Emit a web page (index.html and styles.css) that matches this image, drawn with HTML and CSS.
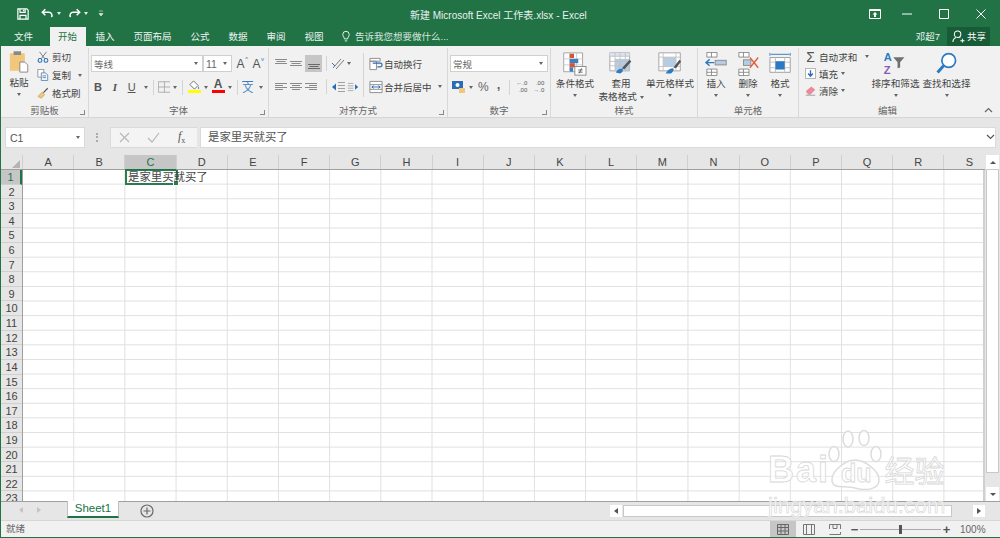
FILE: index.html
```html
<!DOCTYPE html>
<html lang="zh-CN">
<head>
    <meta charset="UTF-8">
    <title>新建 Microsoft Excel 工作表.xlsx - Excel</title>
    <link rel="stylesheet" href="styles.css">
</head>
<body>
<div class="window">
    <!-- title bar -->
    <header class="titlebar">
        <div class="qat">
            <svg class="qat-save" width="12" height="12" viewBox="0 0 14 14"><path d="M1 1h10.500L13 2.500V13H1z M3.500 1v4h6V1 M3.500 13V8.500h7V13" fill="none" stroke="#fff" stroke-width="1.400"/><rect x="7" y="2" width="1.500" height="2" fill="#fff"/></svg>
            <svg class="qat-undo" width="13" height="11" viewBox="0 0 15 12"><path d="M5 1L1.500 4.500 5 8" fill="none" stroke="#fff" stroke-width="1.700"/><path d="M2 4.500h7a3.500 3.500 0 0 1 3 5.500" fill="none" stroke="#fff" stroke-width="1.700"/></svg>
            <i class="caret caret-white"></i>
            <svg class="qat-redo" width="13" height="11" viewBox="0 0 15 12"><path d="M10 1l3.500 3.500L10 8" fill="none" stroke="#fff" stroke-width="1.700"/><path d="M13 4.500H6a3.500 3.500 0 0 0-3 5.500" fill="none" stroke="#fff" stroke-width="1.700"/></svg>
            <i class="caret caret-white"></i>
            <svg class="qat-more" width="6" height="7" viewBox="0 0 6 7"><path d="M1 1h4M1 3.500h4L3 6z" fill="#dcebe3" stroke="#dcebe3" stroke-width=".6"/></svg>
        </div>
        <div class="doc-title">新建 Microsoft Excel 工作表.xlsx - Excel</div>
        <div class="win-buttons">
            <svg class="win-display" width="12" height="10" viewBox="0 0 12 10"><path d="M.5.500h11v9H.5z" fill="none" stroke="#fff"/><path d="M1 1h10v1H1zM6 3l2.500 2.500h-1.500V8H5V5.500H3.500z" fill="#fff"/></svg>
            <svg width="10" height="10" viewBox="0 0 10 10"><path d="M0 5h10" stroke="#fff"/></svg>
            <svg width="10" height="10" viewBox="0 0 10 10"><path d="M.5.500h9v9h-9z" fill="none" stroke="#fff"/></svg>
            <svg width="10" height="10" viewBox="0 0 10 10"><path d="M.5.500l9 9M9.500.500l-9 9" stroke="#fff"/></svg>
        </div>
    </header>

    <!-- tabs -->
    <nav class="tabs">
        <a class="tab tab-file">文件</a>
        <a class="tab tab-active">开始</a>
        <a class="tab">插入</a>
        <a class="tab">页面布局</a>
        <a class="tab">公式</a>
        <a class="tab">数据</a>
        <a class="tab">审阅</a>
        <a class="tab">视图</a>
        <a class="tell-me">
            <svg width="8" height="13" viewBox="0 0 10 14"><path d="M3 10C3 8 1 7 1 4.500a4 4 0 0 1 8 0C9 7 7 8 7 10zM3.500 12.500h3" fill="none" stroke="#fff" stroke-width="1.100"/></svg>
            告诉我您想要做什么...
        </a>
        <div class="account">
            <span class="user">邓超7</span>
            <span class="share">
                <svg width="13" height="13" viewBox="0 0 14 14"><circle cx="6" cy="4.500" r="3.500" fill="none" stroke="#fff" stroke-width="1.100"/><path d="M1 13c0-3 2-4.500 3.500-5M8 8l1 .5M9 11.500h4.500M11.200 9.500v4" fill="none" stroke="#fff" stroke-width="1.100"/></svg>
                共享
            </span>
        </div>
    </nav>

    <!-- ribbon -->
    <section class="ribbon">
        <div class="group group-clipboard">
            <div class="group-body clip-body">
                <div class="big-btn paste-btn">
                    <svg width="22" height="25" viewBox="0 0 24 30"><rect x="1" y="4" width="18" height="21" rx="1" fill="#f0c77c"/><rect x="5.500" y="1.500" width="9" height="4.500" fill="#8a8a8a"/><path d="M13 14.500h6l3.500 3.500v8.500H13z" fill="#fff" stroke="#7a7a7a"/></svg>
                    <span>粘贴</span>
                    <i class="caret"></i>
                </div>
                <div class="clip-list">
                    <div class="clip-item">
                        <svg width="12" height="12" viewBox="0 0 14 14"><path d="M3 1l6 8M11 1L5 9" stroke="#6a6a6a" fill="none"/><circle cx="3.500" cy="11" r="2.200" fill="none" stroke="#2b6cb5" stroke-width="1.200"/><circle cx="10.500" cy="11" r="2.200" fill="none" stroke="#2b6cb5" stroke-width="1.200"/></svg>
                        剪切
                    </div>
                    <div class="clip-item">
                        <svg width="12" height="12" viewBox="0 0 14 14"><path d="M1 .500h7v9H1z" fill="#fff" stroke="#8a8a8a"/><path d="M5 4.500h5l2.500 2.500v6.500H5z" fill="#eef4fa" stroke="#5a85b0"/><path d="M6.500 8h4M6.500 10h4" stroke="#5a85b0"/></svg>
                        复制
                        <i class="caret caret-copy"></i>
                    </div>
                    <div class="clip-item">
                        <svg width="12" height="12" viewBox="0 0 14 14"><path d="M1 11l5-5 3 3-4 4z" fill="#f0c77c" stroke="#b08c40" stroke-width=".6"/><path d="M7 6l5-5 1 1-5 5z" fill="#555"/></svg>
                        格式刷
                    </div>
                </div>
            </div>
            <div class="group-name">剪贴板<i class="launcher"></i></div>
        </div>

        <div class="group group-font">
            <div class="group-body stack">
                <div class="row font-row">
                    <div class="input font-name">等线<i class="caret"></i></div>
                    <div class="input font-size">11<i class="caret"></i></div>
                    <span class="grow-btn">A<sup>^</sup></span>
                    <span class="grow-btn">A<sup class="blue">v</sup></span>
                </div>
                <div class="row font-tools">
                    <b class="fmt">B</b>
                    <i class="fmt fmt-i">I</i>
                    <u class="fmt fmt-u">U</u>
                    <i class="caret"></i>
                    <span class="vsep"></span>
                    <svg width="13" height="12" viewBox="0 0 16 14"><path d="M.5.500h15v13H.5zM8 .500v13M.5 7h15" fill="none" stroke="#a0a0a0"/></svg>
                    <i class="caret"></i>
                    <span class="vsep"></span>
                    <span class="color-btn">
                        <svg width="12" height="10" viewBox="0 0 13 11"><path d="M6 1l5 5-4 4-5-5z" fill="#fff" stroke="#666"/><path d="M11.500 7c1 1.500 1 3 0 3s-1-1.500 0-3" fill="#5b8fc7"/></svg>
                        <em class="bar bar-yellow"></em>
                    </span>
                    <i class="caret caret-tight"></i>
                    <span class="color-btn color-a">A<em class="bar bar-red"></em></span>
                    <i class="caret"></i>
                    <span class="vsep"></span>
                    <span class="wen">文</span>
                    <i class="caret"></i>
                </div>
            </div>
            <div class="group-name">字体<i class="launcher"></i></div>
        </div>

        <div class="group group-align">
            <div class="group-body align-body">
                <div class="align-icons">
                    <div class="row align-row">
                        <svg width="14" height="12" viewBox="0 0 14 12"><path d="M1 1.500h12M2.500 3.500h9M1 5.500h12" stroke="#8a8a8a"/></svg>
                        <svg width="14" height="12" viewBox="0 0 14 12"><path d="M1 3.500h12M2.500 5.500h9M1 7.500h12" stroke="#8a8a8a"/></svg>
                        <span class="on"><svg width="14" height="12" viewBox="0 0 14 12"><path d="M1 6.500h12M2.500 8.500h9M1 10.500h12" stroke="#6a6a6a"/></svg></span>
                        <span class="vsep"></span>
                        <svg width="15" height="13" viewBox="0 0 15 13"><path d="M2 11L10 2M5 12l8-9" stroke="#777" fill="none"/><path d="M1 6l3 3" stroke="#2b6cb5"/></svg>
                        <i class="caret"></i>
                    </div>
                    <div class="row align-row">
                        <svg width="14" height="12" viewBox="0 0 14 12"><path d="M1 2.500h12M1 4.500h8M1 6.500h12M1 8.500h8" stroke="#8a8a8a"/></svg>
                        <svg width="14" height="12" viewBox="0 0 14 12"><path d="M1 2.500h12M3 4.500h8M1 6.500h12M3 8.500h8" stroke="#8a8a8a"/></svg>
                        <svg width="14" height="12" viewBox="0 0 14 12"><path d="M1 2.500h12M5 4.500h8M1 6.500h12M5 8.500h8" stroke="#8a8a8a"/></svg>
                        <span class="vsep vsep-wide"></span>
                        <svg width="15" height="12" viewBox="0 0 15 12"><path d="M7 1.500h7M7 4.500h7M7 7.500h7M7 10.500h7" stroke="#a0a0a0"/><path d="M1 6l4-3.500v7z" fill="#2b6cb5"/></svg>
                        <svg width="12" height="12" viewBox="0 0 15 12"><path d="M1 1.500h7M1 4.500h7M1 7.500h7M1 10.500h7" stroke="#a0a0a0"/><path d="M14 6l-4-3.500v7z" fill="#2b6cb5"/></svg>
                    </div>
                </div>
                <span class="vsep tall"></span>
                <div class="align-wide">
                    <div class="wide-item">
                        <svg width="14" height="14" viewBox="0 0 15 14"><path d="M1 1h11v3H1zM1 4h7v9H1z" fill="#fff" stroke="#8a8a8a"/><path d="M4 6h8a2 2 0 0 1 0 4H9" fill="none" stroke="#2b6cb5" stroke-width="1.300"/></svg>
                        自动换行
                    </div>
                    <div class="wide-item">
                        <svg width="14" height="14" viewBox="0 0 15 14"><path d="M1 1h13v12H1z" fill="#fff" stroke="#8a8a8a"/><path d="M1 4.500h13M1 9.500h13" stroke="#8a8a8a"/><path d="M3 7h9M3 7l2-1.500M3 7l2 1.500M12 7l-2-1.500M12 7l-2 1.500" stroke="#2b6cb5" fill="none"/></svg>
                        合并后居中
                        <i class="caret caret-merge"></i>
                    </div>
                </div>
            </div>
            <div class="group-name">对齐方式<i class="launcher"></i></div>
        </div>

        <div class="group group-number">
            <div class="group-body stack">
                <div class="input num-format">常规<i class="caret"></i></div>
                <div class="row num-tools">
                    <svg width="14" height="14" viewBox="0 0 14 14"><rect x="0" y="1" width="11" height="8" fill="#2b6cb5"/><circle cx="5.500" cy="5" r="2" fill="#fff"/><rect x="7" y="8" width="6" height="5" fill="#f0c77c"/></svg>
                    <i class="caret"></i>
                    <span class="pct">%</span>
                    <span class="comma">,</span>
                    <span class="vsep"></span>
                    <span class="dec"><em><b>←</b>.0</em><em>.00</em></span>
                    <span class="dec"><em>.00</em><em><b>→</b>.0</em></span>
                </div>
            </div>
            <div class="group-name">数字<i class="launcher"></i></div>
        </div>

        <div class="group group-styles">
            <div class="group-body big-row">
                <div class="big-btn style-btn style-cond">
                    <svg viewBox="0 0 30 28"><path d="M2 1h22v22H2z" fill="#fff" stroke="#9a9a9a"/><path d="M2 8h22M2 15h22M9 1v22M17 1v22" stroke="#c8c8c8"/><rect x="9" y="2" width="5" height="5" fill="#d2553a"/><rect x="9" y="8" width="10" height="5" fill="#3f7fbf"/><rect x="9" y="13" width="6" height="5" fill="#d2553a"/><rect x="9" y="18" width="4" height="5" fill="#3f7fbf"/><rect x="15" y="17" width="13" height="10" fill="#fff" stroke="#808080"/><path d="M19 21h5M19 23.500h5M23 19l-3 6" stroke="#555" fill="none"/></svg>
                    <span>条件格式</span>
                    <i class="caret"></i>
                </div>
                <div class="big-btn style-btn style-table">
                    <svg viewBox="0 0 28 28"><path d="M1 1h23v21H1z" fill="#fff" stroke="#9a9a9a"/><rect x="1" y="1" width="23" height="4" fill="#dbe4ed"/><rect x="7" y="8" width="17" height="14" fill="#b7cce3"/><path d="M1 5h23M1 11h23M1 16h23M7 1v21M13 1v21M19 1v21" stroke="#c0c0c0"/><path d="M26 11l-8 9-3-1 9-10z" fill="#555"/><path d="M8 24c2-4 5-5 8-4 1 2-1 4-3 5z" fill="#2b7bc4"/></svg>
                    <span>套用<br>表格格式 <i class="caret caret-inline"></i></span>
                </div>
                <div class="big-btn style-btn style-cell">
                    <svg viewBox="0 0 28 28"><path d="M1 1h25v21H1z" fill="#fff" stroke="#9a9a9a"/><rect x="6" y="6" width="15" height="11" fill="#b7cce3"/><path d="M1 6h25M1 17h25M6 1v21M21 1v21" stroke="#c0c0c0"/><path d="M27 11l-6 8-3-1 7-9z" fill="#555"/><path d="M9 25c2-4 5-6 9-6 1 2-1 5-3 6z" fill="#2b7bc4"/></svg>
                    <span>单元格样式</span>
                    <i class="caret"></i>
                </div>
            </div>
            <div class="group-name">样式</div>
        </div>

        <div class="group group-cells">
            <div class="group-body big-row">
                <div class="big-btn cell-btn">
                    <svg viewBox="0 0 24 26"><path d="M2 .500h11v5H2zM7 .500v5M2 18.500h11v7H2zM7 18.500v7M2 22h11" fill="#fff" stroke="#8a8a8a"/><rect x="11" y="9" width="12" height="5" fill="#b7cce3" stroke="#8a8a8a"/><path d="M10 11.500H1M5 8l-4 3.500L5 15" fill="none" stroke="#2b7bc4" stroke-width="1.500"/></svg>
                    <span>插入</span>
                    <i class="caret"></i>
                </div>
                <div class="big-btn cell-btn">
                    <svg viewBox="0 0 24 26"><path d="M2 .500h11v5H2zM7 .500v5M2 18.500h11v7H2zM7 18.500v7M2 22h11" fill="#fff" stroke="#8a8a8a"/><rect x="7" y="8.500" width="8" height="6" fill="#b7cce3" stroke="#8a8a8a"/><path d="M14 6l9 11M23 6l-9 11" stroke="#e0603a" stroke-width="1.500"/></svg>
                    <span>删除</span>
                    <i class="caret"></i>
                </div>
                <div class="big-btn cell-btn">
                    <svg viewBox="0 0 24 26"><path d="M1 1v3M23 1v3M2 2.500h20" stroke="#2b7bc4"/><path d="M1 6h22v16H1z" fill="#fff" stroke="#9a9a9a"/><path d="M1 11h22M1 17h22M7 6v16M17 6v16" stroke="#c0c0c0"/><rect x="7" y="10" width="10" height="9" fill="#2b7bc4"/></svg>
                    <span>格式</span>
                    <i class="caret"></i>
                </div>
            </div>
            <div class="group-name">单元格</div>
        </div>

        <div class="group group-edit">
            <div class="group-body edit-body">
                <div class="edit-list">
                    <div class="edit-item"><span class="sigma">Σ</span>自动求和<i class="caret caret-sum"></i></div>
                    <div class="edit-item">
                        <svg width="11" height="11" viewBox="0 0 14 14"><path d="M.5.500h13v13H.5z" fill="#fff" stroke="#9a9a9a"/><path d="M7 3v7M4 7l3 3.500L10 7" fill="none" stroke="#2b6cb5" stroke-width="1.700"/></svg>
                        填充<i class="caret"></i>
                    </div>
                    <div class="edit-item">
                        <svg width="11" height="11" viewBox="0 0 14 14"><path d="M1 8l7-6 5 4-6 6H4z" fill="#ea8a9a"/><path d="M1 13h12" stroke="#8a8a8a"/></svg>
                        清除<i class="caret"></i>
                    </div>
                </div>
                <div class="big-btn edit-btn">
                    <svg viewBox="0 0 30 28"><text x="1" y="11" class="az az-a">A</text><text x="1" y="26" class="az az-z">Z</text><path d="M12 6h13l-5 6v6l-3 1v-7z" fill="#707070"/></svg>
                    <span>排序和筛选</span>
                    <i class="caret"></i>
                </div>
                <div class="big-btn edit-btn">
                    <svg viewBox="0 0 26 28"><circle cx="16" cy="10" r="8" fill="#fff" stroke="#2b7bc4" stroke-width="2"/><path d="M10 16L3 24" stroke="#2b7bc4" stroke-width="3.500"/></svg>
                    <span>查找和选择</span>
                    <i class="caret"></i>
                </div>
            </div>
            <div class="group-name">编辑</div>
        </div>
        <svg class="collapse" width="9" height="6" viewBox="0 0 9 6"><path d="M1 5l3.500-3.500L8 5" fill="none" stroke="#666" stroke-width="1.200"/></svg>
    </section>

    <!-- formula bar -->
    <section class="formula-bar">
        <div class="name-box">C1<i class="caret"></i></div>
        <div class="fb-grip"></div>
        <div class="fb-btns">
            <svg width="11" height="11" viewBox="0 0 11 11"><path d="M1 1l9 9M10 1l-9 9" stroke="#b8b8b8" stroke-width="1.200"/></svg>
            <svg width="13" height="11" viewBox="0 0 13 11"><path d="M1 6l4 4 7-9" fill="none" stroke="#b8b8b8" stroke-width="1.200"/></svg>
            <span class="fx">f<sub>x</sub></span>
        </div>
        <div class="fb-input">是家里买就买了</div>
        <svg class="fb-down" width="9" height="6" viewBox="0 0 9 6"><path d="M1 1l3.500 3.500L8 1" fill="none" stroke="#555" stroke-width="1.200"/></svg>
    </section>

    <!-- sheet -->
    <section class="sheet">
        <div class="sheet-main">
            <div class="col-heads">
                <div class="corner"></div>
                <span>A</span><span>B</span><span class="sel">C</span><span>D</span><span>E</span><span>F</span><span>G</span><span>H</span><span>I</span><span>J</span><span>K</span><span>L</span><span>M</span><span>N</span><span>O</span><span>P</span><span>Q</span><span>R</span><span>S</span>
            </div>
            <div class="grid-wrap">
                <div class="row-heads">
                    <span class="sel">1</span><span>2</span><span>3</span><span>4</span><span>5</span><span>6</span><span>7</span><span>8</span><span>9</span><span>10</span><span>11</span><span>12</span><span>13</span><span>14</span><span>15</span><span>16</span><span>17</span><span>18</span><span>19</span><span>20</span><span>21</span><span>22</span><span>23</span>
                </div>
                <div class="cells">
                    <div class="cell-text">是家里买就买了</div>
                    <div class="active-cell"></div>
                </div>
            </div>
        </div>
        <div class="vscroll">
            <span class="arrow"><i class="tri tri-up"></i></span>
            <div class="thumb"></div>
            <span class="arrow"><i class="tri tri-down"></i></span>
        </div>
    </section>

    <!-- sheet tabs -->
    <section class="tabbar">
        <div class="sheet-nav"><i class="tri tri-left"></i><i class="tri tri-right"></i></div>
        <div class="sheet-tab">Sheet1</div>
        <svg class="add-sheet" width="14" height="14" viewBox="0 0 14 14"><circle cx="7" cy="7" r="6" fill="none" stroke="#6a6a6a" stroke-width="1.200"/><path d="M7 3.500v7M3.500 7h7" stroke="#6a6a6a" stroke-width="1.200"/></svg>
        <div class="hscroll">
            <span class="arrow"><i class="tri tri-left tri-dark"></i></span>
            <div class="hthumb"></div>
            <span class="arrow"><i class="tri tri-right tri-dark"></i></span>
        </div>
    </section>

    <!-- status bar -->
    <footer class="statusbar">
        <span class="status-text">就绪</span>
        <div class="views">
            <span class="view view-on"><svg width="12" height="11" viewBox="0 0 12 11"><path d="M.5.500h11v10H.5zM4 .500v10M8 .500v10M.5 3.500h11M.5 7h11" fill="none" stroke="#666"/></svg></span>
            <span class="view"><svg width="12" height="11" viewBox="0 0 12 11"><path d="M.5.500h11v10H.5zM3.500.500v10M8.500.500v10" fill="none" stroke="#777"/></svg></span>
            <span class="view"><svg width="12" height="11" viewBox="0 0 12 11"><path d="M.5 5V.500h11V5M.5 10.500h11V8M4 .500v4h4v-4" fill="none" stroke="#777"/></svg></span>
        </div>
        <div class="zoom">
            <span class="zoom-btn">−</span>
            <div class="slider"><i></i></div>
            <span class="zoom-btn">+</span>
            <span class="zoom-val">100%</span>
        </div>
    </footer>

    <!-- photo watermark lying over the sheet -->
    <div class="watermark">
        <svg class="wm-paw" width="60" height="62" viewBox="0 0 60 62"><g fill="rgba(255,255,255,.7)" stroke="#dcdcdc" stroke-width="1.500"><ellipse cx="7" cy="24" rx="5" ry="7.500"/><ellipse cx="21" cy="9" rx="5" ry="8"/><ellipse cx="37" cy="8" rx="5" ry="7.500"/><ellipse cx="49" cy="24" rx="5" ry="7.500"/><path d="M5 50c0-10 14-20 23-20s24 10 24 20-14 11-24 8-23 2-23-8z"/></g></svg>
        <div class="wm-line">
            <span class="wm-bai">Bai</span>
            <span class="wm-du">du</span>
            <span class="wm-cn">经验</span>
        </div>
        <div class="wm-url">jingyan.baidu.com</div>
    </div>
</div>
</body>
</html>
```

FILE: styles.css
```css
* {
    box-sizing: border-box;
}

html, body {
    margin: 0;
    height: 100%;
}

body {
    font-family: "Liberation Sans", "Noto Sans CJK SC", sans-serif;
    font-size: 10px;
    color: #444;
    overflow: hidden;
}

i, em, sup, sub {
    font-style: normal;
}

.window {
    width: 1000px;
    height: 538px;
    display: flex;
    flex-direction: column;
    border: 1px solid #217346;
    border-top: 0;
    border-right: 0;
    background: #e6e6e6;
    position: relative;
    overflow: hidden;
}

.caret {
    display: inline-block;
    flex: none;
    width: 0;
    height: 0;
    border: 2.500px solid transparent;
    border-top: 3px solid #666;
    border-bottom: 0;
}

.caret-white {
    border-top-color: #e4efe9;
}

/* title bar */
.titlebar {
    height: 27px;
    background: #217346;
    display: flex;
    align-items: center;
    color: #fff;
    position: relative;
    flex: none;
}

.qat {
    display: flex;
    align-items: center;
    margin-left: 16px;
}

.qat-undo {
    margin-left: 12px;
    margin-right: 3px;
}

.qat-redo {
    margin-left: 7px;
    margin-right: 3px;
}

.qat-more {
    margin-left: 10px;
}

.doc-title {
    position: absolute;
    left: 409px;
    top: 7px;
    font-size: 10px;
    color: #e8f1ec;
    white-space: nowrap;
}

.win-buttons {
    margin-left: auto;
    margin-right: 14px;
    display: flex;
    align-items: center;
    gap: 27px;
}

.win-display {
    margin-right: -6px;
}

/* tabs */
.tabs {
    height: 19px;
    background: #217346;
    display: flex;
    align-items: stretch;
    flex: none;
    color: #eef5f1;
    font-size: 9.500px;
    line-height: 20px;
}

.tab {
    padding: 0 9.500px;
    white-space: nowrap;
}

.tab-file {
    padding: 0 13px;
    width: 49px;
}

.tab-active {
    background: #f1f1f1;
    color: #217346;
    width: 36px;
    padding: 0 8px;
}

.tell-me {
    display: flex;
    align-items: center;
    gap: 5px;
    margin-left: 9px;
    color: #d8e7df;
    white-space: nowrap;
}

.account {
    margin-left: auto;
    display: flex;
    align-items: center;
    margin-right: 10px;
}

.user {
    margin-right: 7px;
}

.share {
    background: #185c37;
    height: 19px;
    width: 43px;
    display: flex;
    align-items: center;
    gap: 2px;
    padding-left: 5px;
    color: #fff;
}

/* ribbon */
.ribbon {
    height: 72px;
    background: #f1f1f1;
    border-bottom: 1px solid #d6d6d6;
    display: flex;
    flex: none;
    position: relative;
}

.group {
    display: flex;
    flex-direction: column;
    padding-top: 2px;
    border-right: 1px solid #d8d8d8;
    margin-top: 2px;
    position: relative;
}

.group-body {
    flex: 1;
    min-height: 0;
}

.group-name {
    height: 13px;
    flex: none;
    line-height: 13px;
    text-align: center;
    font-size: 9.500px;
    color: #666;
    position: relative;
}

.launcher {
    position: absolute;
    right: 3px;
    bottom: 2px;
    width: 5px;
    height: 5px;
    border-right: 1px solid #888;
    border-bottom: 1px solid #888;
}

.row {
    display: flex;
    align-items: center;
}

.stack {
    display: flex;
    flex-direction: column;
}

.vsep {
    display: inline-block;
    flex: none;
    width: 1px;
    height: 15px;
    background: #d4d4d4;
}

.big-btn {
    display: flex;
    flex-direction: column;
    align-items: center;
    line-height: 13px;
    font-size: 9.600px;
    color: #444;
    text-align: center;
    white-space: nowrap;
    flex: none;
}

.big-row,
.edit-body {
    display: flex;
    padding-top: 2px;
}

.big-row svg,
.edit-btn svg {
    height: 24px;
    flex: none;
}

.big-btn span {
    margin-top: 1px;
}

.big-btn > .caret {
    margin-top: 4px;
}

/* clipboard */
.group-clipboard {
    width: 88px;
}

.clip-body {
    display: flex;
}

.paste-btn {
    width: 36px;
}

.clip-list {
    display: flex;
    flex-direction: column;
    margin-top: -2px;
}

.clip-item {
    height: 18px;
    display: flex;
    align-items: center;
    gap: 3px;
    font-size: 9.500px;
    white-space: nowrap;
}

.caret-copy {
    margin-left: 4px;
}

/* font */
.group-font {
    width: 180px;
}

.font-row {
    padding: 5px 0 0 2px;
}

.input {
    height: 17px;
    background: #fff;
    border: 1px solid #d0d0d0;
    display: flex;
    align-items: center;
    justify-content: space-between;
    padding: 0 4px 0 2px;
    font-size: 9.500px;
    color: #666;
}

.font-name {
    width: 112px;
}

.font-size {
    width: 29px;
    margin-left: 0;
    font-size: 10.500px;
}

.grow-btn {
    width: 15px;
    margin-left: 1px;
    font-size: 12px;
    color: #555;
    text-align: center;
    position: relative;
}

.grow-btn sup {
    font-size: 6px;
    position: absolute;
    top: -1px;
    right: 0;
    color: #555;
}

.grow-btn sup.blue {
    color: #2b7bc4;
}

.font-tools {
    margin-top: 7px;
    padding-left: 1px;
    height: 16px;
}

.fmt {
    width: 16px;
    margin-right: 1px;
    font-size: 11px;
    color: #555;
    text-align: center;
}

.fmt-i {
    font-style: italic;
    font-family: "Liberation Serif", serif;
    font-weight: bold;
}

.font-tools .caret {
    margin: 0 5px 0 3px;
}

.font-tools .caret-tight {
    margin-right: 3px;
}

.font-tools .vsep {
    margin-right: 4px;
}

.color-btn {
    width: 14px;
    height: 16px;
    padding-bottom: 2px;
    display: flex;
    flex-direction: column;
    align-items: center;
    justify-content: flex-end;
}

.bar {
    display: block;
    width: 13px;
    height: 3px;
    flex: none;
}

.bar-yellow {
    background: #ffff00;
}

.bar-red {
    background: #ff0000;
}

.color-a {
    font-size: 12px;
    line-height: 11px;
    font-weight: bold;
    color: #555;
}

.wen {
    font-size: 11px;
    color: #3c7fc0;
    width: 14px;
    text-decoration: overline;
}

/* alignment */
.group-align {
    width: 179px;
}

.align-body {
    display: flex;
    padding: 3px 0 0 5px;
}

.align-icons {
    width: 86px;
}

.align-row {
    height: 21px;
    gap: 1px;
    margin-bottom: 2px;
}

.align-row .on {
    background: #c6c6c6;
    width: 17px;
    height: 17px;
    display: flex;
    align-items: center;
    justify-content: center;
    margin-left: 1px;
}

.align-row .vsep {
    margin: 0 3px;
}

.align-row .vsep-wide {
    margin-left: 7px;
}

.vsep.tall {
    height: 44px;
    margin: 0 5px 0 3px;
}

.align-wide {
    display: flex;
    flex-direction: column;
    margin-top: -1px;
}

.wide-item {
    height: 23px;
    display: flex;
    align-items: center;
    gap: 1px;
    font-size: 9.500px;
    white-space: nowrap;
}

.caret-merge {
    margin-left: 5px;
}

/* number */
.group-number {
    width: 103px;
}

.group-number .stack {
    padding: 5px 0 0 2px;
}

.num-format {
    width: 98px;
}

.num-tools {
    margin-top: 7px;
    padding-left: 2px;
    height: 16px;
}

.num-tools .caret {
    margin: 0 5px 0 3px;
}

.pct {
    font-size: 12px;
    color: #666;
    margin-right: 8px;
}

.comma {
    font-size: 13px;
    font-weight: bold;
    color: #666;
    margin: -6px 9px 0 0;
}

.dec {
    display: flex;
    flex-direction: column;
    font-size: 6px;
    line-height: 7px;
    color: #555;
    margin-left: 4px;
    width: 13px;
    text-align: right;
}

.dec b {
    color: #2b7bc4;
}

/* styles / cells */
.group-styles {
    width: 147px;
}

.group-cells {
    width: 101px;
}

.style-cond {
    width: 48px;
}

.style-table {
    width: 44px;
}

.style-cell {
    width: 54px;
}

.caret-inline {
    vertical-align: middle;
}

.cell-btn {
    width: 32px;
}

.cell-btn:first-child {
    margin-left: 2px;
}

/* editing */
.group-edit {
    width: 177px;
    border-right: 0;
}

.edit-list {
    width: 71px;
    margin-top: -4px;
    padding-left: 6px;
}

.edit-item {
    height: 17px;
    display: flex;
    align-items: center;
    gap: 3px;
    font-size: 9.600px;
    white-space: nowrap;
}

.sigma {
    font-size: 14px;
    width: 11px;
    color: #555;
    text-align: center;
}

.caret-sum {
    margin-left: 5px;
}

.edit-btn {
    width: 51px;
}

.az {
    font-size: 13px;
    font-weight: bold;
}

.az-a {
    fill: #2b7bc4;
}

.az-z {
    fill: #8a5bb5;
}

.collapse {
    position: absolute;
    right: 7px;
    bottom: 4px;
}

/* formula bar */
.formula-bar {
    height: 37px;
    padding: 9px 4px 0 4px;
    display: flex;
    align-items: flex-start;
    flex: none;
    background: #e6e6e6;
    position: relative;
}

.name-box {
    width: 80px;
    height: 21px;
    background: #fff;
    border: 1px solid #dadada;
    display: flex;
    align-items: center;
    justify-content: space-between;
    padding: 0 4px;
    font-size: 10.500px;
    color: #555;
}

.fb-grip {
    width: 25px;
    height: 21px;
    position: relative;
}

.fb-grip::after {
    content: "";
    position: absolute;
    left: 11px;
    top: 6px;
    width: 2px;
    height: 9px;
    border-left: 2px dotted #aaa;
}

.fb-btns {
    width: 87px;
    height: 21px;
    background: #f4f4f4;
    border: 1px solid #dadada;
    border-right: 0;
    display: flex;
    align-items: center;
    gap: 17px;
    padding-left: 8px;
}

.fx {
    font-family: "Liberation Serif", serif;
    font-style: italic;
    font-size: 12px;
    color: #555;
    margin-left: 1px;
}

.fx sub {
    font-size: 8px;
}

.fb-input {
    flex: 1;
    height: 21px;
    margin-left: 3px;
    background: #fff;
    border: 1px solid #dadada;
    padding-left: 7px;
    line-height: 19px;
    font-size: 11.400px;
    color: #555;
}

.fb-down {
    position: absolute;
    right: 5px;
    top: 16px;
}

/* sheet */
.sheet {
    flex: 1;
    min-height: 0;
    display: flex;
}

.sheet-main {
    flex: 1;
    min-width: 0;
    display: flex;
    flex-direction: column;
    overflow: hidden;
}

.col-heads {
    height: 15px;
    display: flex;
    flex: none;
    border-bottom: 1px solid #9f9f9f;
    background: #e6e6e6;
}

.corner {
    width: 22px;
    flex: none;
    position: relative;
    border-right: 1px solid #cfcfcf;
}

.corner::after {
    content: "";
    position: absolute;
    right: 2px;
    bottom: 1px;
    border: 4.500px solid #b4b4b4;
    border-top-color: transparent;
    border-left-color: transparent;
}

.col-heads span {
    width: 51.200px;
    flex: none;
    text-align: center;
    font-size: 11px;
    line-height: 14px;
    color: #444;
    border-right: 1px solid #cfcfcf;
}

.col-heads span.sel {
    background: #c6c6c6;
    color: #217346;
    border-bottom: 1px solid #217346;
    height: 15px;
}

.grid-wrap {
    flex: 1;
    min-height: 0;
    display: flex;
    position: relative;
}

.row-heads {
    width: 22px;
    flex: none;
    display: flex;
    flex-direction: column;
    background: #e6e6e6;
    border-right: 1px solid #9f9f9f;
    overflow: hidden;
}

.row-heads span {
    height: 14.620px;
    flex: none;
    text-align: center;
    font-size: 11px;
    line-height: 14px;
    color: #444;
    border-bottom: 1px solid #cfcfcf;
}

.row-heads span.sel {
    background: #c6c6c6;
    color: #217346;
    border-right: 2px solid #217346;
}

.cells {
    flex: 1;
    min-width: 0;
    position: relative;
    background-color: #fff;
    background-image:
        linear-gradient(to right, transparent 50.200px, #e0e0e0 50.200px),
        linear-gradient(to bottom, transparent 13.620px, #e0e0e0 13.620px);
    background-size: 51.200px 100%, 100% 14.620px;
    border-right: 2px solid #d0d0d0;
    overflow: hidden;
}

.cell-text {
    position: absolute;
    left: 105px;
    top: 0;
    font-size: 11.400px;
    line-height: 15px;
    color: #444;
    white-space: nowrap;
    z-index: 1;
}

.active-cell {
    position: absolute;
    left: 102px;
    top: -1px;
    width: 53px;
    height: 16px;
    border: 2px solid #2a7d50;
}

.active-cell::after {
    content: "";
    position: absolute;
    right: -3px;
    bottom: -3px;
    width: 4px;
    height: 4px;
    background: #2a7d50;
    border: 1px solid #fff;
}

/* scrollbars */
.vscroll {
    width: 15px;
    flex: none;
    background: #e6e6e6;
    display: flex;
    flex-direction: column;
}

.arrow {
    width: 13px;
    height: 14px;
    background: #fff;
    flex: none;
    display: flex;
    align-items: center;
    justify-content: center;
}

.vscroll .arrow {
    margin: 0 auto;
}

.thumb {
    flex: 1;
    background: #fff;
    margin: 0 1px 14px;
    border: 1px solid #c8c8c8;
}

.tri {
    display: inline-block;
    width: 0;
    height: 0;
    border: 3px solid transparent;
}

.tri-up {
    border-top: 0;
    border-bottom: 3px solid #555;
}

.tri-down {
    border-bottom: 0;
    border-top: 3px solid #555;
}

.tri-left {
    border-left: 0;
    border-right: 4px solid #c4c4c4;
}

.tri-right {
    border-right: 0;
    border-left: 4px solid #c4c4c4;
}

.tri-dark.tri-left {
    border-right-color: #555;
}

.tri-dark.tri-right {
    border-left-color: #555;
}

/* sheet tabs */
.tabbar {
    height: 19px;
    flex: none;
    display: flex;
    align-items: flex-start;
    background: #e6e6e6;
    border-top: 1px solid #9f9f9f;
    position: relative;
}

.sheet-nav {
    width: 66px;
    height: 16px;
    display: flex;
    align-items: center;
    padding-left: 18px;
    gap: 14px;
}

.sheet-tab {
    width: 52px;
    height: 17px;
    margin-top: -1px;
    background: #fff;
    border: 1px solid #c0c0c0;
    border-top: 0;
    border-bottom: 2px solid #217346;
    color: #217346;
    font-size: 11.500px;
    line-height: 15px;
    text-align: center;
}

.add-sheet {
    margin: 2px 0 0 21px;
}

.hscroll {
    position: absolute;
    left: 609px;
    top: 3px;
    height: 12px;
    display: flex;
    align-items: center;
}

.hscroll .arrow {
    height: 12px;
    width: 12px;
}

.hthumb {
    width: 329px;
    height: 12px;
    margin: 0 21px 0 1px;
    background: #fff;
    border: 1px solid #c8c8c8;
    flex: none;
}

/* status bar */
.statusbar {
    height: 17px;
    flex: none;
    display: flex;
    align-items: stretch;
    background: #f1f1f1;
    border-top: 1px solid #d6d6d6;
    font-size: 9.500px;
    color: #666;
}

.status-text {
    margin-left: 5px;
    line-height: 16px;
}

.views {
    margin-left: auto;
    display: flex;
}

.view {
    width: 26px;
    display: flex;
    align-items: center;
    justify-content: center;
}

.view-on {
    background: #c6c6c6;
}

.zoom {
    display: flex;
    align-items: center;
    width: 152px;
    padding-left: 2px;
}

.zoom-btn {
    font-size: 13px;
    line-height: 15px;
    color: #555;
    font-weight: bold;
    width: 9px;
    text-align: center;
}

.slider {
    width: 81px;
    height: 1px;
    background: #aaa;
    margin: 0 1px;
    position: relative;
}

.slider i {
    position: absolute;
    left: 39px;
    top: -4px;
    width: 3px;
    height: 9px;
    background: #555;
}

.zoom-val {
    margin-left: 9px;
    font-size: 10px;
}

/* watermark */
.watermark {
    position: absolute;
    left: 767px;
    top: 430px;
    width: 180px;
    height: 90px;
    pointer-events: none;
    line-height: 1;
    z-index: 2;
}

.wm-paw {
    position: absolute;
    left: 59px;
    top: 0;
}

.wm-line {
    position: absolute;
    left: 0;
    top: 22px;
    display: flex;
    align-items: baseline;
    white-space: nowrap;
    color: rgba(255, 255, 255, .75);
    -webkit-text-stroke: .8px #d8d8d8;
}

.wm-bai {
    font-size: 36px;
    letter-spacing: 2px;
    font-weight: bold;
}

.wm-du {
    font-size: 25px;
    font-weight: bold;
    margin-left: 11px;
}

.wm-cn {
    font-size: 30px;
    margin-left: 13px;
}

.wm-url {
    position: absolute;
    left: 0;
    top: 65px;
    font-size: 22px;
    white-space: nowrap;
    color: rgba(255, 255, 255, .75);
    -webkit-text-stroke: .7px #d8d8d8;
}
```
